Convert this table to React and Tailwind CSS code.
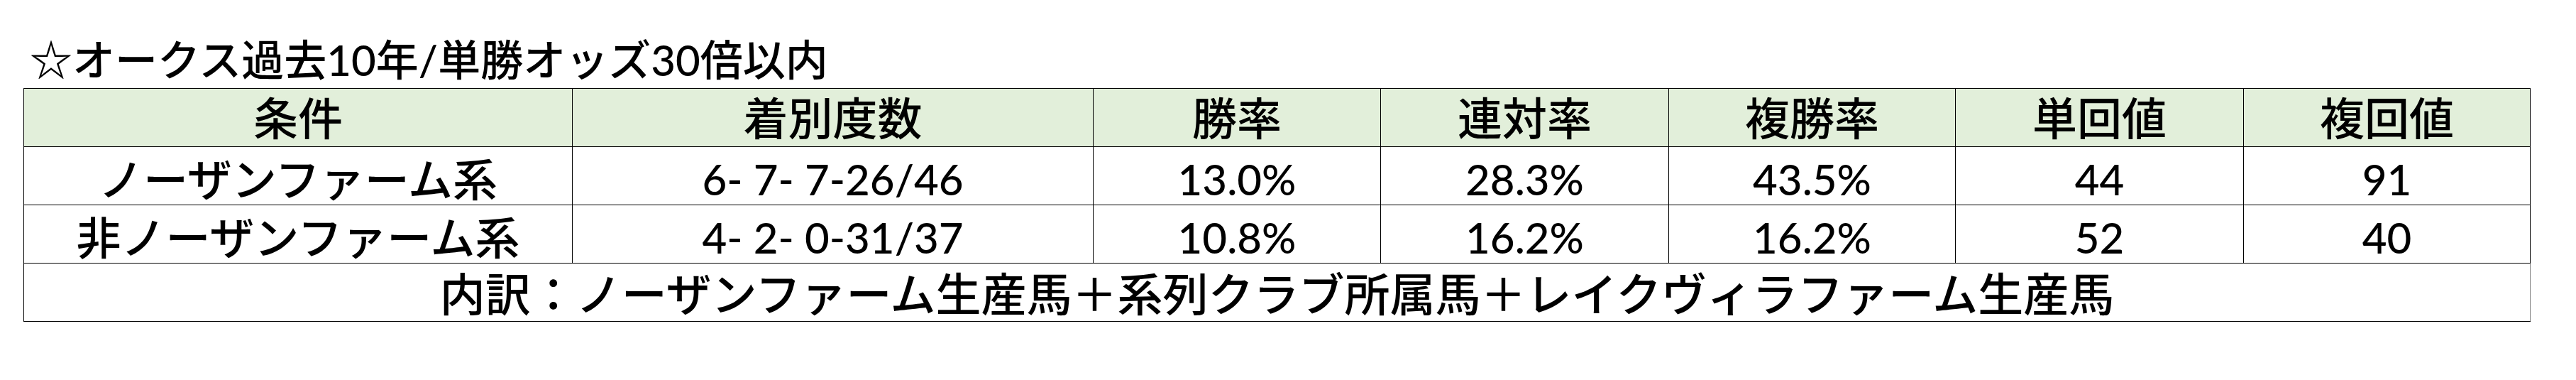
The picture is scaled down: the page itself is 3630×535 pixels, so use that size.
const cols = ["w-[773px]", "w-[734px]", "w-[405px]", "w-[406px]", "w-[404px]", "w-[406px]", "w-[404px]"];

const headers = ["条件", "着別度数", "勝率", "連対率", "複勝率", "単回値", "複回値"];

const rows = [
  ["ノーザンファーム系", "6- 7- 7-26/46", "13.0%", "28.3%", "43.5%", "44", "91"],
  ["非ノーザンファーム系", "4- 2- 0-31/37", "10.8%", "16.2%", "16.2%", "52", "40"],
];

export default function App() {
  return (
    <div className="w-[3630px] h-[535px] bg-white text-black font-medium font-['Lato','Noto_Sans_CJK_JP',sans-serif]">
      <div className="pl-[42px] pt-[48px] h-[124px] text-[60px] leading-[72px] whitespace-nowrap">
        ☆オークス過去10年/単勝オッズ30倍以内
      </div>
      <table className="ml-[33px] w-[3533px] border-collapse table-fixed leading-none">
        <colgroup>
          {cols.map((c, i) => (
            <col key={i} className={c} />
          ))}
        </colgroup>
        <thead>
          <tr className="h-[82px] bg-[#e2efda]">
            {headers.map((h) => (
              <th key={h} className="border border-black font-medium text-[63px] text-center align-middle p-0">
                {h}
              </th>
            ))}
          </tr>
        </thead>
        <tbody>
          {rows.map((r, i) => (
            <tr key={i} className="h-[82px]">
              {r.map((v, j) => (
                <td
                  key={j}
                  className={
                    j === 0
                      ? "border border-black text-[63px] text-center align-middle p-0 pt-[8px] whitespace-nowrap"
                      : "border border-black text-[60px] text-center align-middle p-0 pt-[8px] whitespace-nowrap"
                  }
                >
                  {v}
                </td>
              ))}
            </tr>
          ))}
          <tr className="h-[82px]">
            <td colSpan={7} className="border border-black border-r-[#808080] text-[64px] text-center align-middle p-0 pt-[4px] whitespace-nowrap">
              内訳：ノーザンファーム生産馬＋系列クラブ所属馬＋レイクヴィラファーム生産馬
            </td>
          </tr>
        </tbody>
      </table>
    </div>
  );
}
